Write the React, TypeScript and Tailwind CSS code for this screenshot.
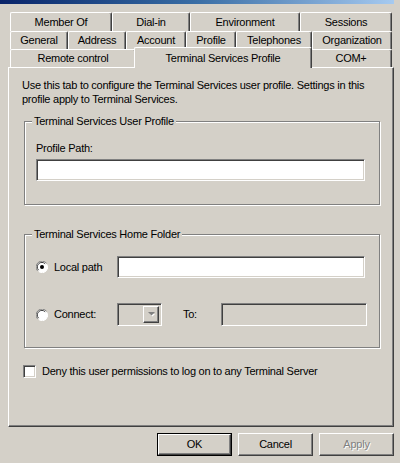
import React from 'react'

const raised =
  'border border-t-white border-l-white border-r-[#404040] border-b-[#404040] shadow-[inset_-1px_-1px_0_#808080]'
const sunken =
  'border border-t-[#808080] border-l-[#808080] border-r-white border-b-white shadow-[inset_1px_1px_0_#404040,inset_-1px_-1px_0_#d4d0c8]'

interface TabDef {
  label: string
  w: string
  selected?: boolean
}

const rows: { h: string; tabs: TabDef[] }[] = [
  {
    h: 'h-[19px]',
    tabs: [
      { label: 'Member Of', w: 'w-[102px]' },
      { label: 'Dial-in', w: 'w-[78px]' },
      { label: 'Environment', w: 'w-[110px]' },
      { label: 'Sessions', w: 'w-[92px]' },
    ],
  },
  {
    h: 'h-[18px]',
    tabs: [
      { label: 'General', w: 'w-[58px]' },
      { label: 'Address', w: 'w-[58px]' },
      { label: 'Account', w: 'w-[60px]' },
      { label: 'Profile', w: 'w-[50px]' },
      { label: 'Telephones', w: 'w-[76px]' },
      { label: 'Organization', w: 'w-[80px]' },
    ],
  },
  {
    h: 'h-[18px]',
    tabs: [
      { label: 'Remote control', w: 'w-[126px]' },
      { label: 'Terminal Services Profile', w: 'w-[174px]', selected: true },
      { label: 'COM+', w: 'w-[82px]' },
    ],
  },
]

const Tab = ({ tab, h }: { tab: TabDef; h: string }) => {
  if (tab.selected) {
    return (
      <div className={`${tab.w} relative z-10 -mt-[2px] -mb-[1px] flex h-[21px] flex-col`}>
        <div className="-mx-[2px] flex flex-1 items-start justify-center rounded-tl-[2px] rounded-tr-[2px] border-t border-l border-r border-t-white border-l-white border-r-[#404040] bg-[#d4d0c8] pt-[2px] shadow-[inset_-1px_0_0_#808080]">
          {tab.label}
        </div>
      </div>
    )
  }
  return (
    <div
      className={`${tab.w} ${h} flex items-center justify-center rounded-tl-[2px] rounded-tr-[2px] border-t border-l border-r border-t-white border-l-white border-r-[#404040] shadow-[inset_-1px_0_0_#808080]`}
    >
      {tab.label}
    </div>
  )
}

const Radio = ({ checked }: { checked?: boolean }) => (
  <svg width="12" height="12" viewBox="0 0 12 12" className="shrink-0">
    <circle cx="6" cy="6" r="5.5" fill="white" />
    <path d="M10.5 2.2 A5.5 5.5 0 0 0 1.5 9.8" stroke="#808080" strokeWidth="1" fill="none" />
    <path d="M9.2 2.8 A4.5 4.5 0 0 0 2.6 9.2" stroke="#404040" strokeWidth="1" fill="none" />
    <path d="M10.9 3.5 A5.5 5.5 0 0 1 3.2 10.9" stroke="#ffffff" strokeWidth="1" fill="none" />
    {checked && <circle cx="6" cy="6" r="2" fill="#000" />}
  </svg>
)

const GroupBox = ({ title, className, children }: { title: string; className: string; children: React.ReactNode }) => (
  <div
    className={`relative ml-[15px] w-[356px] border border-[#808080] shadow-[inset_1px_1px_0_white,1px_1px_0_white] ${className}`}
  >
    <span className="absolute -top-[8px] left-[7px] bg-[#d4d0c8] px-[2px] leading-[14px]">{title}</span>
    {children}
  </div>
)

const Button = ({ label, isDefault, disabled }: { label: string; isDefault?: boolean; disabled?: boolean }) => (
  <div className={`h-[23px] w-[75px] ${isDefault ? 'border border-black' : ''}`}>
    <div
      className={`${raised} flex h-full w-full items-center justify-center ${
        disabled ? 'text-[#808080] [text-shadow:1px_1px_0_white]' : ''
      }`}
    >
      {label}
    </div>
  </div>
)

export default function App() {
  return (
    <div className="relative h-[463px] w-[400px] overflow-hidden bg-[#d4d0c8] font-['Liberation_Sans',Arial,sans-serif] text-[11px] tracking-[-0.25px] text-black">
      <div className="h-[4px] w-[394px] bg-gradient-to-r from-[#0a246a] via-[#3a6ea5] to-[#a6caf0]" />

      {/* tab rows */}
      <div className="mt-[8px] ml-[10px] flex w-[382px] flex-col">
        {rows.map((row, i) => (
          <div key={i} className="flex">
            {row.tabs.map((t) => (
              <Tab key={t.label} tab={t} h={row.h} />
            ))}
          </div>
        ))}
      </div>

      {/* panel */}
      <div className={`${raised} ml-[8px] flex h-[360px] w-[386px] flex-col`}>
        <p className="mt-[10px] ml-[13px] w-[360px] leading-[14px]">
          Use this tab to configure the Terminal Services user profile. Settings in this profile apply to Terminal
          Services.
        </p>

        <GroupBox title="Terminal Services User Profile" className="mt-[15px] h-[84px] pt-[19px] pl-[11px]">
          <div className="leading-[14px]">Profile Path:</div>
          <div className={`${sunken} mt-[4px] h-[22px] w-[329px] bg-white`} />
        </GroupBox>

        <GroupBox title="Terminal Services Home Folder" className="mt-[29px] h-[114px] pt-[21px] pl-[11px]">
          <div className="flex items-center">
            <div className="flex w-[81px] items-center gap-[6px]">
              <Radio checked />
              <span>Local path</span>
            </div>
            <div className={`${sunken} h-[22px] w-[248px] bg-white`} />
          </div>
          <div className="mt-[25px] flex items-center">
            <div className="flex w-[81px] items-center gap-[6px]">
              <Radio />
              <span>Connect:</span>
            </div>
            <div className={`${sunken} flex h-[23px] w-[45px] justify-end p-[2px]`}>
              <div className={`${raised} flex w-[16px] items-center justify-center`}>
                <svg width="7" height="5" viewBox="0 0 7 5">
                  <path d="M1 1 H6 L3.5 3.5 Z" fill="white" transform="translate(1 1)" />
                  <path d="M0 0 H7 L3.5 3.5 Z" fill="#808080" />
                </svg>
              </div>
            </div>
            <span className="ml-[21px] w-[38px]">To:</span>
            <div className={`${sunken} h-[23px] w-[146px]`} />
          </div>
        </GroupBox>

        <div className="mt-[15px] ml-[14px] flex items-center gap-[6px]">
          <div className={`${sunken} h-[13px] w-[13px] bg-white`} />
          <span>Deny this user permissions to log on to any Terminal Server</span>
        </div>
      </div>

      {/* buttons */}
      <div className="mt-[6px] mr-[6px] flex justify-end gap-[6px]">
        <Button label="OK" isDefault />
        <Button label="Cancel" />
        <Button label="Apply" disabled />
      </div>
    </div>
  )
}
